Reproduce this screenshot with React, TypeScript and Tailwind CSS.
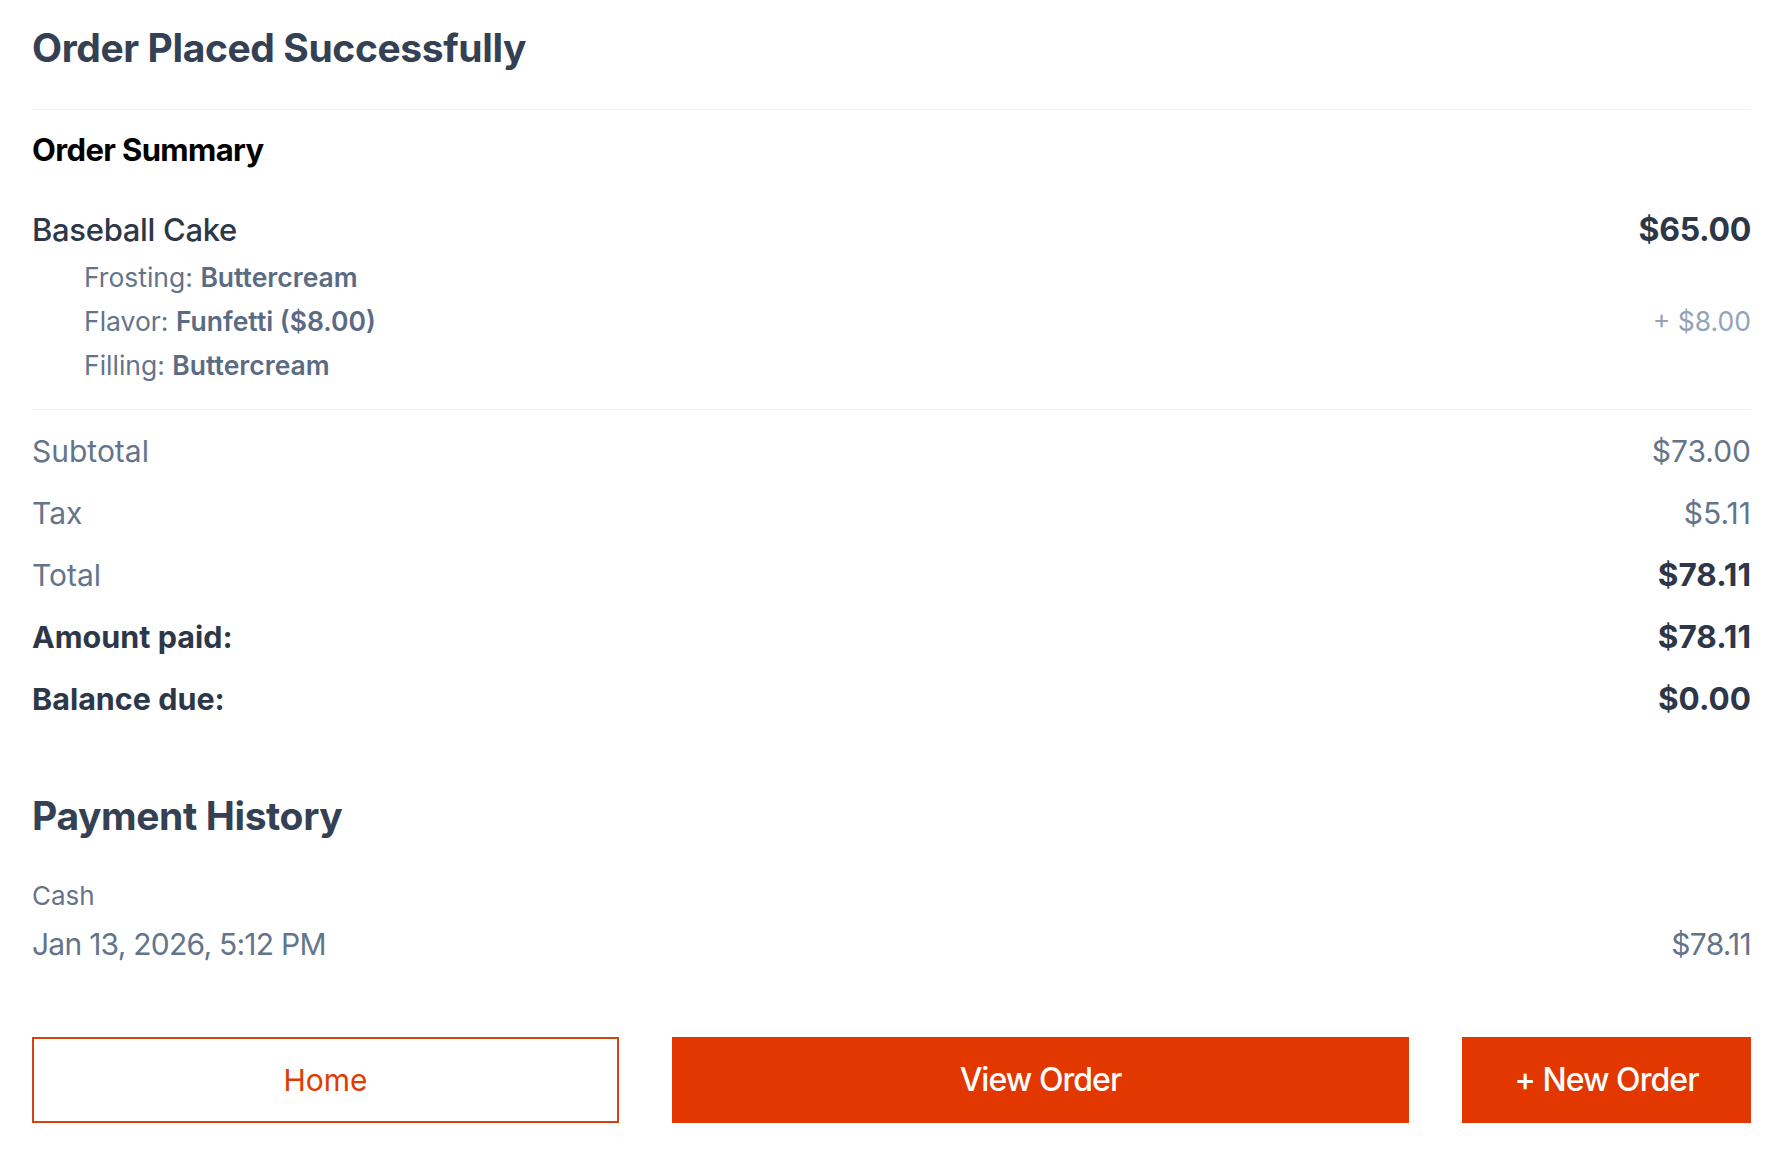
import React from "react";

const options = [
  { label: "Frosting", value: "Buttercream", extra: "" },
  { label: "Flavor", value: "Funfetti ($8.00)", extra: "+ $8.00" },
  { label: "Filling", value: "Buttercream", extra: "" },
];

const totals = [
  { label: "Subtotal", value: "$73.00", strongLabel: false, strongValue: false },
  { label: "Tax", value: "$5.11", strongLabel: false, strongValue: false },
  { label: "Total", value: "$78.11", strongLabel: false, strongValue: true },
  { label: "Amount paid:", value: "$78.11", strongLabel: true, strongValue: true },
  { label: "Balance due:", value: "$0.00", strongLabel: true, strongValue: true },
];

const App: React.FC = () => {
  return (
    <div className="min-h-screen bg-white px-8 pt-6 font-['Inter',sans-serif] text-[#334155]">
      <h1 className="text-[39px] font-bold leading-[48px] tracking-[-0.01em] text-[#344054]">
        Order Placed Successfully
      </h1>
      <div className="mt-[37px] border-b border-[#f0f1f3]" />

      <h2 className="mt-[22px] text-[31px] font-bold leading-[36px] tracking-[-0.02em] text-black">
        Order Summary
      </h2>

      <div className="mt-[44px] flex items-center justify-between leading-[36px]">
        <span className="text-[31px] font-medium tracking-[-0.01em] text-[#2d3748]">Baseball Cake</span>
        <span className="text-[32px] font-bold tracking-[-0.01em] text-[#2d3748]">$65.00</span>
      </div>

      <div className="mt-[7px]">
        {options.map((o) => (
          <div key={o.label} className="flex items-center justify-between pl-[52px] text-[26.5px] leading-[44px]">
            <span className="text-[#64748b]">
              {o.label}: <span className="font-semibold text-[#5b6b84]">{o.value}</span>
            </span>
            <span className="text-[#94a3b8]">{o.extra}</span>
          </div>
        ))}
      </div>

      <div className="mt-[22px] border-b border-[#f0f1f3]" />

      <div className="mt-[10px]">
        {totals.map((t) => (
          <div key={t.label} className="flex items-center justify-between leading-[62px]">
            <span className={t.strongLabel ? "text-[30.5px] font-bold text-[#2d3748]" : "text-[30px] text-[#64748b]"}>
              {t.label}
            </span>
            <span className={t.strongValue ? "text-[31.5px] font-bold text-[#2d3748]" : "text-[30px] text-[#64748b]"}>
              {t.value}
            </span>
          </div>
        ))}
      </div>

      <h2 className="mt-[64px] text-[39px] font-bold leading-[44px] tracking-[-0.01em] text-[#344054]">
        Payment History
      </h2>

      <div className="mt-[42px] text-[26px] leading-[32px] text-[#64748b]">Cash</div>
      <div className="mt-[14px] flex items-center justify-between text-[30px] leading-[36px] tracking-[-0.025em] text-[#64748b]">
        <span>Jan 13, 2026, 5:12 PM</span>
        <span>$78.11</span>
      </div>

      <div className="mt-[75px] flex gap-[53px]">
        <button className="h-[86px] w-[587px] border-2 border-[#d4420f] bg-white text-[30px] text-[#e03c00]">
          Home
        </button>
        <button className="h-[86px] flex-1 bg-[#e33700] text-[32px] font-medium tracking-[-0.03em] text-white">
          View Order
        </button>
        <button className="h-[86px] w-[289px] bg-[#e33700] text-[32px] font-medium tracking-[-0.03em] text-white">
          + New Order
        </button>
      </div>
    </div>
  );
};

export default App;
